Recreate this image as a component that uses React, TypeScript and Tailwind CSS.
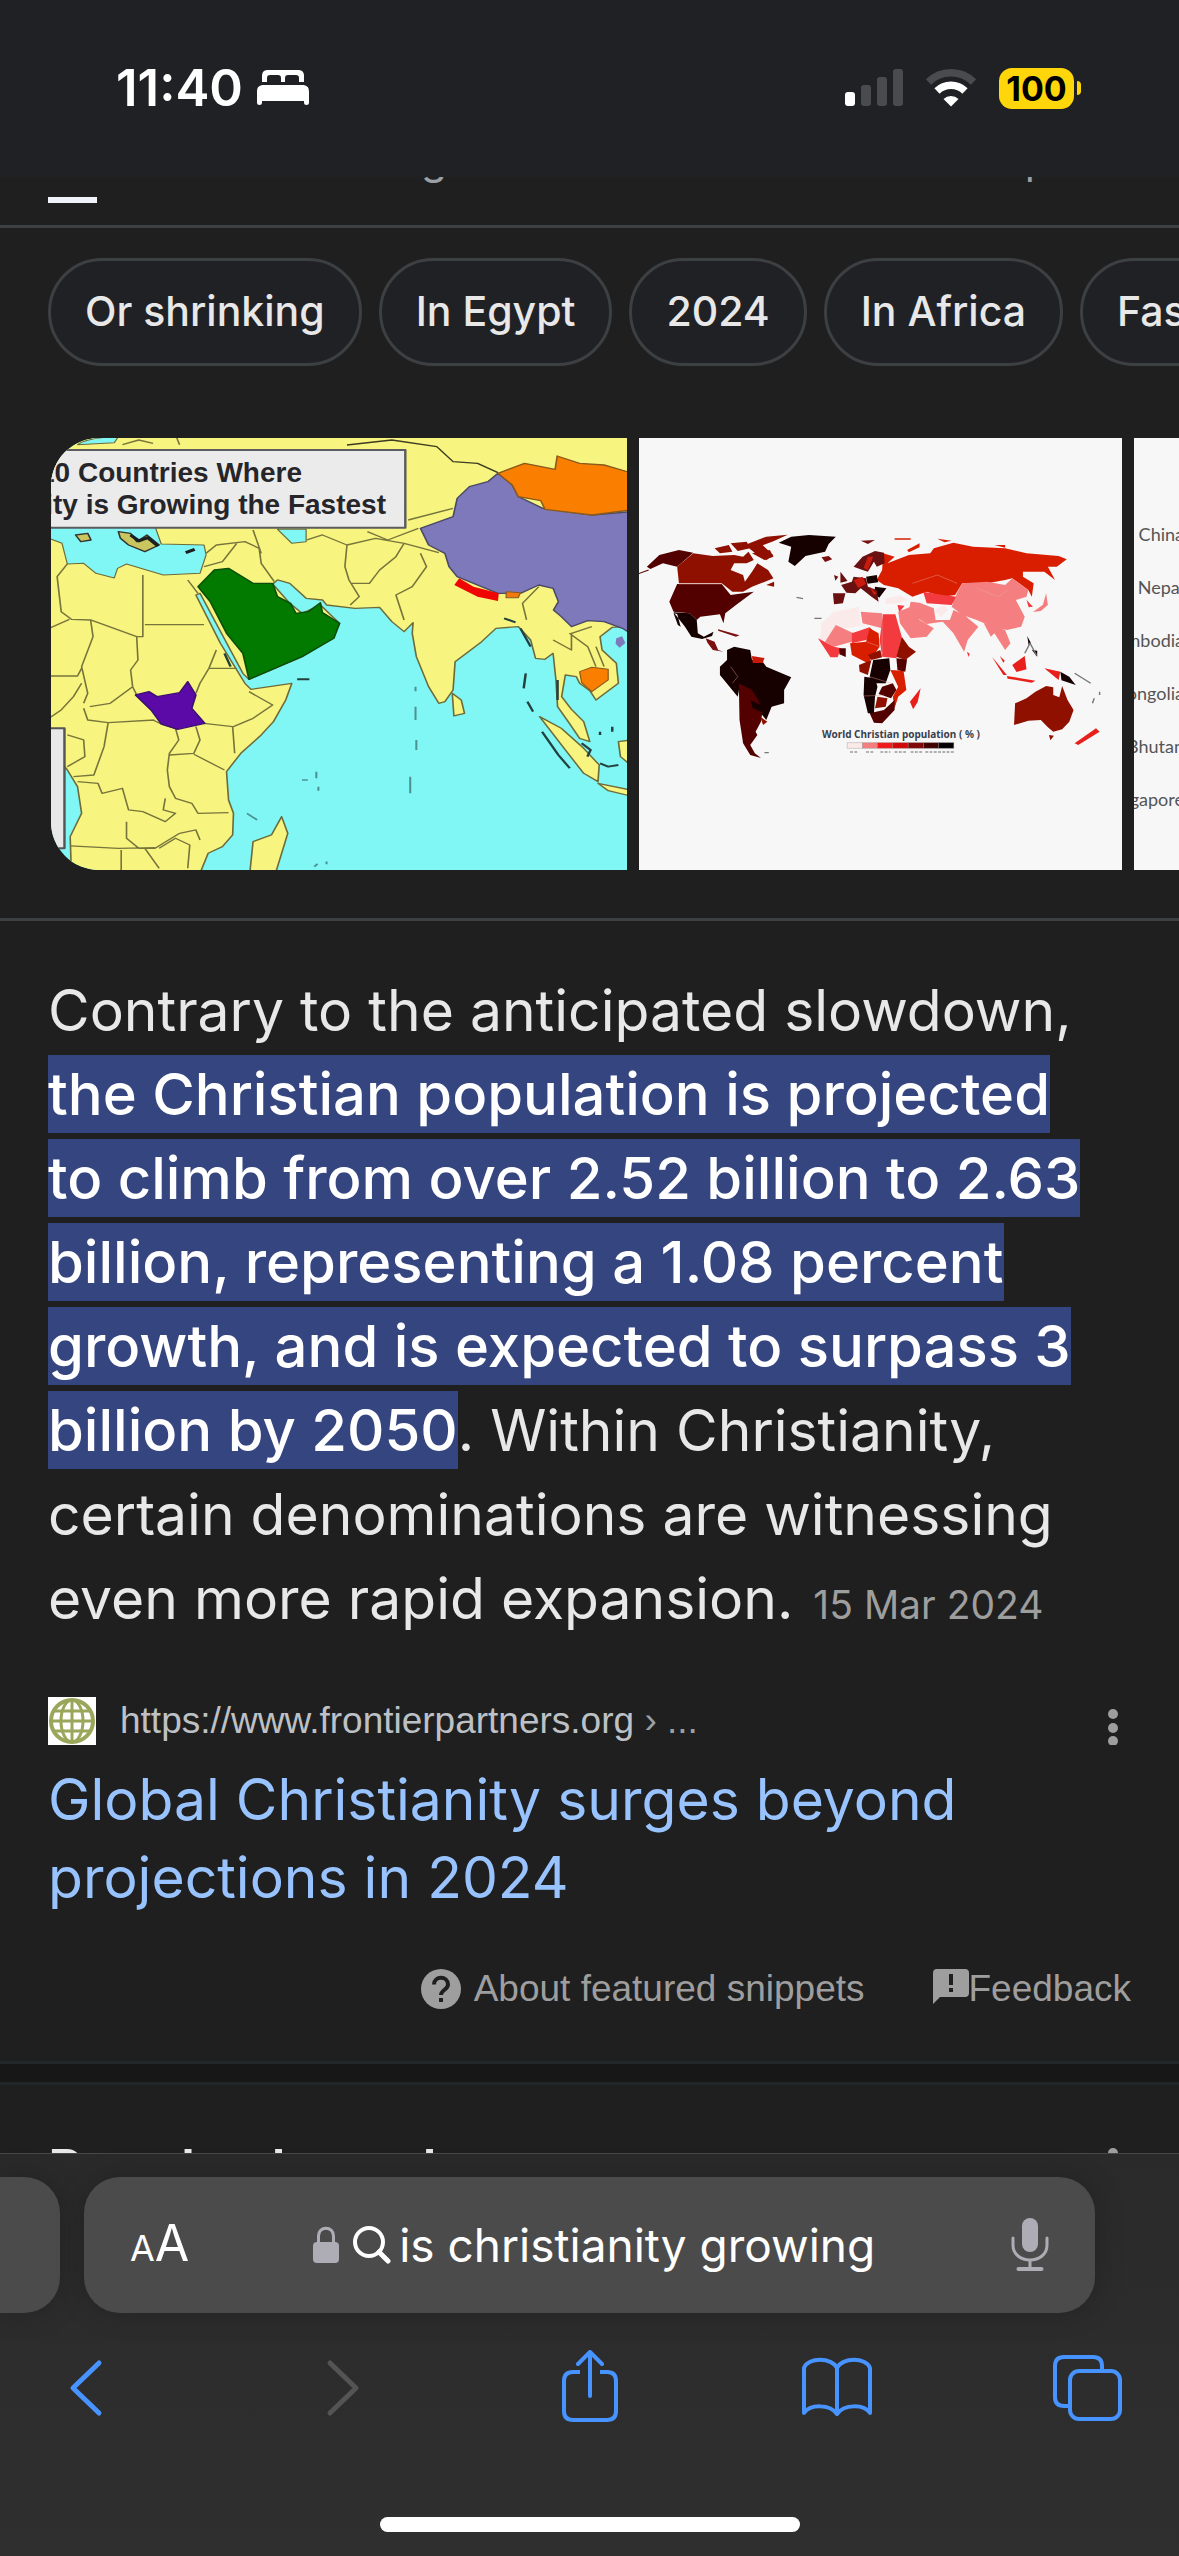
const tabs = ['All', 'News', 'Images', 'Videos', 'Books', 'Maps'];
const chips = ['Or shrinking', 'In Egypt', '2024', 'In Africa', 'Fastest'];
const chartRows = ['China', 'Nepal', 'Cambodia', 'Mongolia', 'Bhutan', 'Singapore'];

const BedIcon = () => (
  <svg className="h-[36px] w-[52px]" viewBox="0 0 52 36" fill="white" aria-hidden="true">
    <path d="M5 12V6c0-4 2-6 6-6h30c4 0 6 2 6 6v6h-5V8c0-2-1-3-3-3h-8c-2 0-3 1-3 3v4h-4V8c0-2-1-3-3-3h-8c-2 0-3 1-3 3v4z" />
    <path d="M0 22c0-5 2-7 7-7h38c5 0 7 2 7 7v11q0 2-2.500 2T47 33v-2H5v2q0 2-2.500 2T0 33z" />
  </svg>
);

const SignalIcon = () => (
  <svg className="h-[38px] w-[58px]" viewBox="0 0 58 38" fill="#4a4b4f" aria-hidden="true">
    <rect x="0" y="23" width="10" height="14" rx="3" fill="white" />
    <rect x="16" y="16" width="10" height="21" rx="3" />
    <rect x="32" y="8" width="10" height="29" rx="3" />
    <rect x="48" y="0" width="10" height="37" rx="3" />
  </svg>
);

const WifiIcon = () => (
  <svg className="h-[38px] w-[52px]" viewBox="0 0 52 38" fill="none" aria-hidden="true">
    <path d="M3.500 13a32 32 0 0 1 45 0" stroke="#4a4b4f" strokeWidth="7.500" />
    <path d="M12 22a20 20 0 0 1 28 0" stroke="white" strokeWidth="7.500" />
    <path d="M26 37.500l-7.500-7.500a11 11 0 0 1 15 0z" fill="white" />
  </svg>
);

const StatusBar = () => (
  <header className="flex h-[177px] shrink-0 items-start justify-between bg-[#202125] pt-[58px] pr-[98px] pl-[116px]">
    <div className="flex h-[60px] items-center gap-[14px]">
      <time className="text-[51px] leading-[60px] font-semibold">11:40</time>
      <BedIcon />
    </div>
    <div className="flex h-[60px] items-center">
      <SignalIcon />
      <div className="w-[22px]" />
      <WifiIcon />
      <div className="w-[22px]" />
      <span className="flex h-[41px] w-[75px] items-center justify-center rounded-[13px] bg-[#ffd60a] text-[34px] leading-[41px] font-bold text-black">
        100
      </span>
      <span className="ml-[3px] h-[14px] w-[4px] rounded-r-full bg-[#ffd60a]" />
    </div>
  </header>
);

const GrowthMap = () => (
  <svg className="h-[432px] w-[576px] shrink-0 rounded-l-[48px]" viewBox="0 0 576 432" role="img" aria-label="Map of countries where Christianity is growing the fastest">
    <rect width="576" height="432" fill="#80f7f5" />
    <g transform="scale(.4082 .3333) translate(-125 -54)" strokeLinejoin="round">
      <g fill="#f7f57f" stroke="#6d6b3a" strokeWidth="4">
        <path d="M120 50H1545V605L1525 620 1500 622 1470 650 1475 690 1510 730 1515 790 1460 840 1445 812 1420 790 1412 770 1385 765 1376 830 1400 868 1430 905 1445 965 1420 955 1395 910 1366 860 1362 780 1355 700 1335 718 1312 715 1300 660 1270 620 1215 625 1180 665 1115 725 1110 810 1090 845 1075 850 1050 800 1020 710 1010 640 1012 608 990 635 960 605 930 562 870 565 800 555 790 540 750 535 710 490 680 480 668 492 710 550 740 580 785 555 832 610 815 655 740 710 610 778 595 760 490 520 480 525 540 670 600 790 615 808 715 790 700 840 670 905 640 945 590 1000 555 1055 560 1140 572 1180 570 1245 545 1280 510 1300 490 1360H175L172 1250 200 1180 190 1100 165 1050 120 980Z" />
        <path d="M690 1190L705 1240 690 1300 675 1360H612L620 1265 665 1245Z" />
        <path d="M1108 820L1130 840 1138 880 1112 888Z" />
        <path d="M1322 890L1375 925 1430 985 1468 1035 1465 1085 1430 1060 1385 990Z" />
        <path d="M1465 1090L1545 1110V1128L1490 1112Z" />
        <path d="M1545 960L1515 965 1520 1010 1545 1035Z" />
      </g>
      <g fill="#80f7f5" stroke="#6d6b3a" strokeWidth="3">
        <path d="M120 320H380L395 372 500 375 505 405 490 460 400 465 310 432 288 445 280 474 235 460 205 430 165 432 152 370 120 355Z" />
        <path d="M680 328H750V365L715 370Z" />
        <path d="M190 74Q215 52 290 50L280 68Z" />
      </g>
      <path d="M185 345l30-5 8 20-25 5zM290 335l30 5 15 25 25-20 30 30-35 20-40-20-20-20z" fill="#c9c65f" stroke="#333" strokeWidth="4" />
      <path d="M320 345l20 18 22-10 25 25M455 398l22-10" stroke="#1c2020" strokeWidth="9" fill="none" />
      <g fill="none" stroke="#77743c" strokeWidth="4">
        <path d="M165 432L140 470 150 575 175 598 222 600 335 650H350V465M355 614H500M335 652L338 720 320 750 325 800 335 825M120 625L170 598M222 600L228 650 200 740 215 820 205 850M120 768H190L200 745M220 860L270 850 325 800M205 865L215 900 265 908 378 900M265 908L255 980 230 1065 180 1070M375 900L400 915 430 925 438 960 415 1000 410 1050 415 1100 430 1135 470 1150 485 1180 560 1178M480 920L490 960 475 1000 415 1005M475 1003L550 1050M500 910L570 920 575 1000M572 920L620 895 668 855 610 815M530 690L512 745 490 790 480 820M512 745L580 745M190 1085L240 1090 250 1120 300 1105 315 1170 350 1175 405 1205 430 1180 400 1170 405 1135M310 1205V1255L340 1285 380 1285 440 1240 480 1230 490 1260M172 1278L290 1285 380 1283M297 1290V1360M355 1285L390 1345M390 1285L430 1255 465 1275 460 1345M120 895L150 870 180 830 200 790M165 945L205 960 208 1010 165 1040M460 480L485 520" />
        <path d="M505 400L530 375 600 365 635 385 640 430 672 485M500 440L545 425 580 370M620 330L640 400M752 360L790 345 850 375 845 440 855 480 880 530 858 555M850 375L920 355 990 370 970 410 930 450 905 490H860M1030 400L1045 440 1010 500 970 525 990 600M990 370L1075 398M900 335L950 360 1025 325M1000 300L1110 265M1320 500L1280 550 1290 600M1395 640L1440 680 1460 740M1355 660L1400 690 1400 640 1450 620M1460 680L1480 740M440 74L432 50M300 74L340 60 375 70" />
        <path d="M850 75L960 60 1070 80 1110 125 1170 130 1220 158" stroke="#3d3b22" />
      </g>
      <path d="M1220 160L1255 195 1270 230 1330 265 1450 285 1545 275V640L1525 625 1480 605 1440 602 1400 620 1375 590 1356 570 1368 545 1355 505 1320 495 1275 520 1220 520 1120 470 1100 440 1090 400 1050 375 1030 325 1110 290 1120 235 1150 200 1195 185Z" fill="#7d79bb" stroke="#4b4a66" strokeWidth="4" />
      <path d="M1220 160L1285 130 1360 148 1365 108 1420 130 1480 135 1545 158V270L1450 285 1335 268 1325 242 1270 230 1255 195Z" fill="#fa7f00" stroke="#8b5a1c" strokeWidth="4" />
      <path d="M1125 475L1160 500 1222 520 1220 543 1170 530 1113 495Z" fill="#ef0504" />
      <path d="M1240 515L1275 518 1270 533H1240Z" fill="#f07a10" stroke="#8b5a1c" strokeWidth="3" />
      <path d="M1420 755L1450 742 1490 748 1490 780 1450 815 1425 788Z" fill="#fa7f00" stroke="#8b5a1c" strokeWidth="3" />
      <path d="M1510 655l14-6 8 20-14 14-10-12z" fill="#7d79bb" />
      <path d="M485 500L525 450 560 445 620 490 668 490 680 530 712 550 725 580 755 575 785 548 790 578 832 610 818 655 740 710 610 778 595 700 555 640 515 545Z" fill="#027a00" stroke="#0b4d0a" strokeWidth="4" />
      <path d="M332 825L365 815 385 830 440 818 460 785 480 825 470 865 502 910 435 928 395 912 370 870Z" fill="#5b0aa8" stroke="#3a1070" strokeWidth="4" />
      <g fill="none" stroke="#23403f" strokeWidth="6">
        <path d="M1235 595l28 12M1275 625l25 55M1288 760l-5 45M1292 845l14 30M1328 935l40 70 28 40M1366 780v60M1425 970l22 20-8 20M1470 935v10M1500 920v15M1470 1030l20 10 25-5M728 778h30M550 700l15 40" />
        <path d="M1018 800v14M1018 860v40M1020 960v30M1005 1070v50M775 1055v20M740 1080h14M780 1100v12M605 1180l25 20M770 1340l8-8M800 1325v8" strokeWidth="5" opacity=".55" />
      </g>
      <path d="M120 925H158V1285H120Z" fill="#e8e8e8" stroke="#555" strokeWidth="6" />
      <path d="M120 90H993V323H120Z" fill="#ebebeb" stroke="#5b5b60" strokeWidth="6" />
    </g>
    <g className="font-['Liberation_Sans'] text-[28px] font-bold" fill="#26262a">
      <text x="-12" y="44">10 Countries Where</text>
      <text x="335" y="76" textAnchor="end">Christianity is Growing the Fastest</text>
    </g>
  </svg>
);

const WorldMap = () => (
  <svg className="h-[432px] w-[483px] shrink-0 bg-[#f7f7f7]" viewBox="0 0 483 432" role="img" aria-label="World Christian population by country">
    <g transform="scale(.3565 .3333) translate(-53 -54)">
      <path fill="#520000" d="M75 440L110 405 165 390 205 398 160 440 120 430 85 447ZM160 492H285L310 525 375 515 325 555 295 580 290 610 280 583 225 590 215 600 195 580 150 575 138 545Z" />
      <path d="M50 462l30-12" stroke="#520000" strokeWidth="3" />
      <path fill="#901000" d="M205 400L260 408 320 405 345 410 360 395 375 420 355 430 320 430 310 450 345 465 350 485 370 455 385 430 415 450 430 475 395 490 370 500 345 515 315 515 285 490H165L160 440ZM265 385l40-10 10 20-35 5zM310 370l45-5 10 20-35 8zM350 375l60-25 60-6-40 20-30 12 30 30-20 15-35-25zM370 400l50-10 10 20-25 10zM410 495l22-10v15z" />
      <path fill="#160000" d="M445 368L480 350 530 345 605 350 585 372 575 395 520 408 490 438 472 425 480 380ZM150 577L195 580 215 600 218 640 235 650 262 635 258 648 230 657 200 650 182 620ZM150 580l12 35 8 5-10-38z" />
      <path fill="#7a1010" d="M565 412l20-4 10 10-20 8zM675 362l40-2-20 12zM240 655l25 10 10 25 15 5-30-5-15-22zM275 628l60 18-10 4-50-18z" />
      <path fill="#160000" d="M300 690L320 680 365 690 370 720 400 725 410 740 480 772 460 810 460 850 425 860 410 900 395 880 365 840 335 800 330 830 280 765 280 740 300 720Z" />
      <path fill="#c81808" d="M370 708l35 6-5 15h-28z" />
      <path fill="#520000" d="M333 790L370 810 385 835 400 870 395 905 380 935 385 945 365 975 378 1000 395 1014 365 1005 345 970 335 900Z" />
      <path fill="#901000" d="M393 890l20 15-12 10z" />
      <path fill="#160000" d="M365 840l35 18v20l-28-14z" />
      <path fill="#d91e00" d="M738 400L770 410 750 430 810 405 870 400 880 385 935 368 990 380 1080 385 1140 400 1230 408 1253 418 1225 440 1200 440 1220 480 1190 455 1130 455 1130 470 1160 490 1155 530 1145 510 1100 475 1080 480 1030 490 960 490 940 525 905 530 860 515 820 530 780 505 740 495 720 480 735 450ZM805 390l35-20v12l-30 15zM890 356l40 6-20 5zM1050 375h30v8zM770 355h45v4h-45z" />
      <path fill="#f33a3f" d="M850 515L905 525 945 530 930 555 860 550ZM778 555l20 2-15 20z" />
      <path fill="#f57f80" d="M945 520L960 490 1030 485 1080 495 1100 475 1145 510 1140 530 1110 540 1135 590 1125 620 1085 630 1045 620 1000 600 960 585 930 560ZM815 545L840 548 880 565 885 600 925 600 935 570 965 585 1005 620 975 660 965 695 935 640 905 605 860 612 835 595 810 570ZM780 575L815 560 840 600 880 625 860 650 815 655 785 610ZM1020 610L1080 630 1095 670 1080 690 1050 640 1040 650ZM1195 520l5 35-20 18-22 3 28-22z" />
      <path fill="#f33a3f" d="M1140 540l18 20-12 2zM973 695l8 6-4 10z" />
      <path fill="#fbeaea" d="M600 575L670 560 675 620 720 605 640 625 600 620 605 660 560 660 565 610ZM745 535l40-8 25 12-25 10-40 4zM880 570l30-15 10 15-20 20z" />
      <path fill="#f57f80" d="M675 575L735 580V625L680 610ZM605 615L655 640 650 665 600 680 575 665Z" />
      <path fill="#f33a3f" d="M737 583H772L790 650 775 715 735 710 728 660ZM555 655L600 680 620 685 610 712 590 712ZM650 640L700 622 715 640 690 660 650 670Z" />
      <path fill="#d91e00" d="M700 625L725 640 728 680 695 730 650 705 645 670 690 665ZM758 750L795 752 803 810 780 830 770 865 765 830 780 800Z" />
      <path fill="#520000" d="M615 685l18 0v26l-18-8zM775 715L805 718 800 755 778 750ZM700 880L740 870 770 840 770 870 735 910 712 908ZM735 800L765 790 775 810 760 835 725 822Z" />
      <path fill="#901000" d="M790 650L810 680 830 695 800 720 775 710ZM670 735L705 720 695 765 672 755ZM715 865L722 830 750 835 745 860ZM695 705L730 690 735 712 705 720ZM1108 850L1140 835 1165 815 1195 798 1215 802 1215 825 1232 832 1240 798 1255 840 1272 870 1260 905 1240 928 1215 935 1200 922 1180 900 1145 902 1105 915ZM1203 945l14 2-10 14z" />
      <path fill="#160000" d="M710 720L755 715 758 750 745 790 720 790 700 770ZM685 770L715 775 722 800 715 830 712 880 695 880 683 825Z" />
      <path fill="#e8201c" d="M843 805L835 845 822 868 813 845ZM1043 710L1085 765 1075 765ZM1100 735l35-27 5 40-28 8zM1085 768l80 14-10 6-68-12zM1190 745l45 10-5 25zM1275 970L1335 925 1345 935 1285 975ZM1065 708l14 14-4 6z" />
      <path fill="#160000" d="M1235 755l25 15 18 25-40-14zM1142 648l10 20-6 8zM1155 690l15 2v18zM690 470l30-5 4 22-30 4zM715 500l32 5-20 28-14-10z" />
      <path fill="#6b1010" d="M655 440L680 410 715 393 740 398 742 430 720 440 712 425 695 455 680 450ZM620 495L650 485 655 470 690 475 695 500 720 510 725 545 705 530 675 505 660 520 635 518ZM597 520H632L625 550 600 553ZM618 455l20 28-20 5zM600 465l12 5-8 12z" />
      <path fill="#c81c10" d="M655 480l25-10 10 22-22 12zM695 410l15 0-15 40-12-6zM700 500l20 20-8 6z" />
      <path d="M165 492H285M310 740L330 770 315 790M735 583V710M690 665L728 680M700 770L760 790M683 828L740 826M940 525L960 490M1000 505L1060 530 1090 510M820 490L890 465 945 490" stroke="#e9a6a0" strokeWidth="2" fill="none" opacity=".6" />
      <path d="M1275 760l45 30M1330 835l-5 15M1345 815v10M1135 700l15-30 18 36M405 998h12M545 595h20M495 532l18 4" stroke="#777" strokeWidth="4" fill="none" />
      <g stroke="#888" strokeWidth="1">
        <path fill="#fbeaea" d="M637 968h43v17h-43z" />
        <path fill="#f57f80" d="M680 968h42v17h-42z" />
        <path fill="#f01a1c" d="M722 968h43v17h-43z" />
        <path fill="#d00808" d="M765 968h43v17h-43z" />
        <path fill="#800808" d="M808 968h43v17h-43z" />
        <path fill="#400000" d="M851 968h42v17h-42z" />
        <path fill="#050000" d="M893 968h43v17h-43z" />
      </g>
      <path d="M645 996h22M690 996h20M730 996h28M770 996h34M815 996h34M856 996h80" stroke="#999" strokeWidth="5" strokeDasharray="8 4" />
    </g>
    <text x="183" y="300" className="font-['Noto_Sans'] text-[10px] font-bold" fill="#3a3f4c">
      World Christian population ( % )
    </text>
  </svg>
);

const CountryChart = () => (
  <div className="flex h-[432px] w-[483px] shrink-0 flex-col overflow-hidden bg-[#f7f7f7] pt-[70px]">
    {chartRows.map((name) => (
      <div key={name} className="flex h-[53px] w-[50px] items-center justify-end font-['Lato'] text-[18px] text-[#555]">
        {name}
      </div>
    ))}
  </div>
);

const KebabIcon = () => (
  <svg className="h-[48px] w-[12px]" viewBox="0 0 12 48" fill="#9e9e9e" aria-hidden="true">
    <circle cx="6" cy="17" r="5" />
    <circle cx="6" cy="31" r="5" />
    <circle cx="6" cy="44" r="5" />
  </svg>
);

const GlobeFavicon = () => (
  <svg className="h-12 w-12 bg-white" viewBox="0 0 48 48" fill="none" stroke="#9aa65a" strokeWidth="3" aria-hidden="true">
    <circle cx="24" cy="24" r="21" strokeWidth="4" />
    <ellipse cx="24" cy="24" rx="11" ry="21" />
    <path d="M24 3v42M4 24h40M7 14h34M7 34h34" />
  </svg>
);

const FeaturedSnippet = () => (
  <article className="px-12 pt-12">
    <p className="pr-9 text-[57px] leading-[84px] text-[#e8e8e8]">
      Contrary to the anticipated slowdown,{' '}
      <mark className="bg-[#35457f] py-1 text-[58px] leading-[80px] font-medium text-white">
        the Christian population is projected to climb from over 2.52 billion to 2.63 billion, representing a 1.08 percent growth, and is expected to surpass 3 billion by 2050
      </mark>
      . Within Christianity, certain denominations are witnessing even more rapid expansion.
      <time className="ml-5 text-[39px] leading-none text-[#9e9e9e]">15 Mar 2024</time>
    </p>
    <div className="mt-14 flex h-12 items-center">
      <GlobeFavicon />
      <cite className="ml-6 flex-1 font-['Liberation_Sans'] text-[37px] leading-[48px] text-[#bdc1c6] not-italic">
        https://www.frontierpartners.org <span className="text-[#9aa0a6]">› ...</span>
      </cite>
      <button type="button" aria-label="About this result" className="mr-[12px]">
        <KebabIcon />
      </button>
    </div>
    <h3 className="mt-4 text-[57px] leading-[78px]">
      <a href="#result" className="text-[#99c3ff]">
        Global Christianity surges beyond projections in 2024
      </a>
    </h3>
    <div className="mt-[52px] mb-[52px] flex h-[40px] items-center justify-end gap-[68px] font-['Liberation_Sans'] text-[37px] leading-[40px] text-[#9e9e9e]">
      <a href="#about" className="flex items-center gap-3">
        <svg className="h-[42px] w-[42px]" viewBox="0 0 42 42" aria-hidden="true">
          <circle cx="21" cy="21" r="20" fill="#9e9e9e" />
          <path d="M14 16.500c0-9 14-9 14 0 0 5-7 5.500-7 10.500" fill="none" stroke="#1f1f1f" strokeWidth="4" />
          <path d="M19 30h4v4h-4z" fill="#1f1f1f" />
        </svg>
        About featured snippets
      </a>
      <a href="#feedback" className="flex items-center">
        <svg className="h-[42px] w-[36px]" viewBox="0 0 36 42" aria-hidden="true">
          <path d="M4 1h28q4 0 4 4v20q0 4-4 4H7L0 36V5q0-4 4-4z" fill="#9e9e9e" />
          <path d="M16 6h4v11h-4zM16 20h4v4h-4z" fill="#1f1f1f" />
        </svg>
        Feedback
      </a>
    </div>
  </article>
);

const BrowserBar = () => (
  <footer className="shrink-0 border-t border-[#484848] bg-gradient-to-b from-[#2a2a2a] to-[#2f2f2f] pt-[23px] pb-6">
    <div className="flex gap-6">
      <div className="h-[136px] w-[60px] rounded-r-[36px] bg-[#4b4b4b] shadow-[0_0_30px_rgba(0,0,0,0.2)]" />
      <div className="mr-[84px] flex h-[136px] flex-1 items-center rounded-[36px] bg-[#4b4b4b] px-[46px] shadow-[0_0_30px_rgba(0,0,0,0.2)]">
        <button type="button" aria-label="Page settings" className="flex items-baseline leading-[60px]">
          <span className="text-[36px]">A</span>
          <span className="text-[50px]">A</span>
        </button>
        <label className="flex flex-1 items-center justify-center pr-3">
          <svg className="mr-[14px] h-[38px] w-[26px]" viewBox="0 0 26 38" aria-hidden="true">
            <path d="M5.500 18V10c0-10.500 15-10.500 15 0v8" fill="none" stroke="#aeadb5" strokeWidth="3" />
            <rect x="0" y="16" width="26" height="21" rx="4" fill="#aeadb5" />
          </svg>
          <svg className="mr-2 h-[38px] w-[38px]" viewBox="0 0 38 38" fill="none" stroke="white" aria-hidden="true">
            <circle cx="16" cy="16" r="14" strokeWidth="4" />
            <path d="M26 26l9 9" strokeWidth="5" strokeLinecap="round" />
          </svg>
          <input type="text" aria-label="Address" defaultValue="is christianity growing" className="w-[476px] bg-transparent text-[46px] leading-[60px] outline-none" />
        </label>
        <button type="button" aria-label="Dictate">
          <svg className="h-[56px] w-[38px]" viewBox="0 0 38 56" fill="none" stroke="#aeadb5" strokeWidth="3" strokeLinecap="round" aria-hidden="true">
            <rect x="11" y="1" width="16" height="34" rx="8" fill="#aeadb5" stroke="none" />
            <path d="M2 21v7c0 20 34 20 34 0v-7M19 44v8" />
            <path d="M7.500 52h23" strokeWidth="4" />
          </svg>
        </button>
      </div>
    </div>
    <nav className="mt-[37px] flex justify-between pr-[57px] pl-[51px] text-[#4793ff]">
      <button type="button" aria-label="Back">
        <svg className="h-[72px] w-[72px]" viewBox="0 0 72 72" fill="none" stroke="currentColor" strokeWidth="5" strokeLinecap="round" strokeLinejoin="round">
          <path d="M48 13L22 38l26 25" />
        </svg>
      </button>
      <button type="button" aria-label="Forward" className="text-[#545454]">
        <svg className="h-[72px] w-[72px]" viewBox="0 0 72 72" fill="none" stroke="currentColor" strokeWidth="5" strokeLinecap="round" strokeLinejoin="round">
          <path d="M29 13l26 25-26 25" />
        </svg>
      </button>
      <button type="button" aria-label="Share">
        <svg className="h-[72px] w-[72px]" viewBox="0 0 72 72" fill="none" stroke="currentColor" strokeWidth="4" strokeLinecap="round" strokeLinejoin="round">
          <path d="M29 22h-7q-9 0-9 9v30q0 9 9 9h34q9 0 9-9V31q0-9-9-9h-7" strokeLinecap="butt" />
          <path d="M39 46V3M27 14L39 2l12 12" />
        </svg>
      </button>
      <button type="button" aria-label="Bookmarks">
        <svg className="h-[72px] w-[72px]" viewBox="0 0 72 72" fill="none" stroke="currentColor" strokeWidth="4" strokeLinecap="round" strokeLinejoin="round">
          <path d="M37 18v46M37 18C32 7 8 7 4 18v45C10 54 30 54 37 64M37 18C42 7 66 7 70 18v45C64 54 44 54 37 64" />
        </svg>
      </button>
      <button type="button" aria-label="Tabs">
        <svg className="h-[72px] w-[72px]" viewBox="0 0 72 72" fill="none" stroke="currentColor" strokeWidth="4">
          <path d="M20 56h-6q-9 0-9-9V16q0-9 9-9h29q9 0 9 9v5" />
          <rect x="20" y="21" width="50" height="48" rx="9" />
        </svg>
      </button>
    </nav>
    <div className="mx-auto mt-[95px] h-[15px] w-[420px] rounded-full bg-white" />
  </footer>
);

export default function App() {
  return (
    <div className="flex h-screen flex-col overflow-hidden bg-[#1f1f1f] font-['Inter',sans-serif] text-white">
      <StatusBar />
      <main className="min-h-0 flex-1 overflow-hidden">
        <nav className="flex h-[51px] items-end gap-[70px] overflow-hidden border-b-[3px] border-[#3c4043] px-12 pb-[22px] text-[42px] leading-[48px] text-[#9aa0a6]">
          {tabs.map((tab, i) => (
            <a key={tab} href={`#${tab.toLowerCase()}`} className="shrink-0">
              {tab}
              <span className={i === 0 ? 'mt-[14px] block h-[6px] bg-[#f1f3fa]' : 'mt-[14px] block h-[6px]'} />
            </a>
          ))}
        </nav>
        <div className="mt-[30px] flex gap-[17px] overflow-hidden pl-12">
          {chips.map((chip) => (
            <button key={chip} type="button" className="h-[108px] shrink-0 rounded-full border-[3px] border-[#3c4043] bg-[#202125] px-[34px] text-[41px] font-medium text-[#e8e8e8]">
              {chip}
            </button>
          ))}
        </div>
        <div className="mt-[72px] flex gap-[12px] overflow-hidden border-b-[3px] border-[#3c4043] pb-12 pl-[51px]">
          <GrowthMap />
          <WorldMap />
          <CountryChart />
        </div>
        <FeaturedSnippet />
        <div className="h-6 border-y-[3px] border-[#22272a] bg-[#171717]" />
        <section className="flex items-start justify-between px-12 pt-12">
          <h2 className="text-[54px] leading-[72px] font-semibold text-[#e8e8e8]">People also ask</h2>
          <button type="button" aria-label="More options" className="mt-[3px] mr-[12px]">
            <KebabIcon />
          </button>
        </section>
      </main>
      <BrowserBar />
    </div>
  );
}
